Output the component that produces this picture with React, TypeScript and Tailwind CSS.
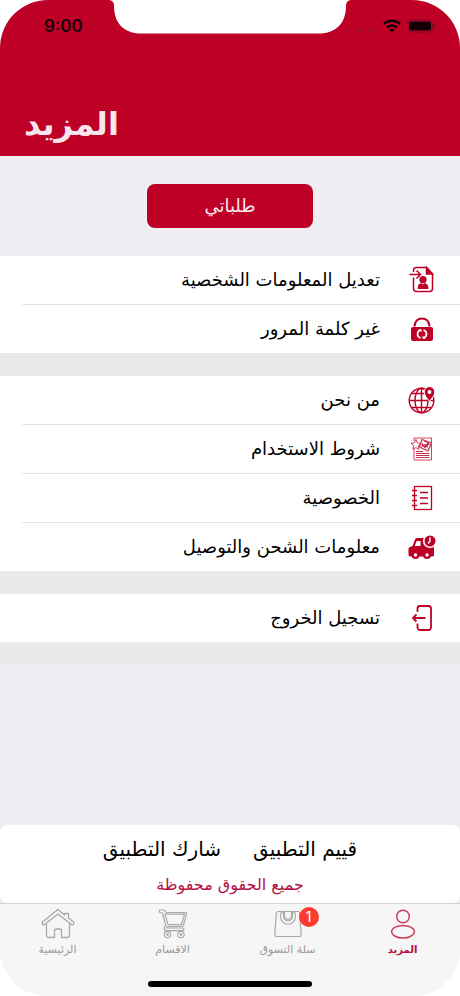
import type { ReactNode } from "react";

const RED = "#be0027";

function EditProfileIcon() {
  return (
    <svg width="28" height="28" viewBox="0 0 28 28" fill="none" stroke={RED} strokeWidth="1.5">
      <path d="M5.500 6V4.500a3 3 0 0 1 3-3h10L24.500 8v14.500a3 3 0 0 1-3 3h-13a3 3 0 0 1-3-3V11.500" />
      <path d="M18.500 1.500V8h6z" fill={RED} />
      <path d="M1.500 8.500h10.500M8.500 4.500l4 4-4 4" />
      <circle cx="15" cy="13.700" r="3.600" fill={RED} stroke="none" />
      <path d="M9.700 23v-1.500c0-2.600 1.500-4.200 3.800-4.200l1.500 1.200 1.500-1.200c2.300 0 3.800 1.600 3.800 4.200V23z" fill={RED} stroke="none" />
    </svg>
  );
}

function PasswordIcon() {
  return (
    <svg width="28" height="28" viewBox="0 0 28 28" fill="none">
      <path d="M6.500 11.500C7 6 10 3.500 14 3.500s7 2.500 7.500 8" stroke={RED} strokeWidth="2" />
      <rect x="3" y="12" width="22" height="14" rx="2" fill={RED} />
      <path d="M12.500 15c-4 1.500-4 6.500 0 8M15.500 15c4 1.500 4 6.500 0 8" stroke="#fff" strokeWidth="1.700" />
      <path d="M10.500 14.300h3v3.200zM17.500 23.700h-3v-3.200z" fill="#fff" />
    </svg>
  );
}

function GlobeIcon() {
  return (
    <svg width="28" height="28" viewBox="0 0 28 28" fill="none" stroke={RED} strokeWidth="1.400">
      <circle cx="13.500" cy="14.500" r="12.300" />
      <ellipse cx="13.500" cy="14.500" rx="6.500" ry="12.300" />
      <path d="M13.500 2.200v24.600M1.200 14.500h24.600M3.500 7.500h20M3.500 21.500h20" />
      <path d="M21.500 15.500c-2.400-3.600-5.300-6-5.300-9.600a5.300 5.300 0 0 1 10.600 0c0 3.600-2.900 6-5.300 9.600z" fill={RED} stroke="#fff" strokeWidth="1" />
      <circle cx="21.500" cy="6" r="2" fill="#fff" stroke="none" />
    </svg>
  );
}

function TermsIcon() {
  return (
    <svg width="28" height="28" viewBox="0 0 28 28" fill="none" stroke={RED} strokeWidth="0.900">
      <g opacity="0.800">
        <path d="M6 6V3h17.500v22H6V13" />
        <path d="M8 16.500h7M8 18.500h13.500M8 20.500h13.500M8 22.500h13.500" strokeWidth="1.100" />
        <path d="M8 4.500L9.300 8l3.700.5-2.800 2.300.8 3.700-3-2-3.200 1.700 1-3.500L3 8.300l3.500-.5z" fill="#fff" />
        <path d="M14 4.500l9.500 3.500-3.500 8-8.500-4z" fill="#fff" strokeWidth="1.300" />
        <path d="M14 8.500l3 4 4.500-5M13.500 11l8-2M16 6l4 1.500-1 5" strokeWidth="1.300" />
      </g>
    </svg>
  );
}

function NotebookIcon() {
  return (
    <svg width="28" height="28" viewBox="0 0 28 28" fill="none" stroke={RED} strokeWidth="1.300">
      <rect x="6.500" y="2.500" width="17" height="23" />
      <path d="M4 6.500h5M4 11.500h5M4 16.500h5M4 21.500h5" strokeWidth="1.500" />
      <path d="M12 8.500h8M12 14h8M12 19.500h8" strokeWidth="1.500" />
    </svg>
  );
}

function DeliveryIcon() {
  return (
    <svg width="28" height="28" viewBox="0 0 28 28">
      <path d="M0.500 22v-6q0-1.500 1.500-2l2.500-1 2.500-6.500Q7.500 5 9 5H22v9h4v8q0 1.500-1.500 1.500h-22q-2 0-2-1.500z" fill={RED} />
      <path d="M6.700 13l2-5h3.800v5z" fill="#fff" />
      <circle cx="7.500" cy="22" r="4" fill={RED} />
      <circle cx="7.500" cy="22" r="1.700" fill="#fff" />
      <circle cx="19" cy="22" r="4" fill={RED} />
      <circle cx="19" cy="22" r="1.700" fill="#fff" />
      <circle cx="22" cy="8" r="6.300" fill={RED} stroke="#fff" strokeWidth="1.600" />
      <path d="M22 4.200v4l-2 2.300" fill="none" stroke="#fff" strokeWidth="1.400" />
    </svg>
  );
}

function LogoutIcon() {
  return (
    <svg width="28" height="28" viewBox="0 0 28 28" fill="none" stroke={RED} strokeWidth="1.800">
      <path d="M9.500 8V4.500a2.500 2.500 0 0 1 2.500-2.500h8.500A2.500 2.500 0 0 1 23 4.500v19a2.500 2.500 0 0 1-2.500 2.500H12a2.500 2.500 0 0 1-2.500-2.500V19.500" />
      <path d="M17.500 14H6M8.500 10.500L5 14l3.500 3.500" />
    </svg>
  );
}

function UserIcon() {
  return (
    <svg width="34" height="32" viewBox="0 0 34 32" fill="none" stroke={RED} strokeOpacity="0.750" strokeWidth="1.500">
      <circle cx="17" cy="8.500" r="6.300" />
      <path d="M5.500 23.500C6 20 11 17.500 17 17.500s11 2.500 11.500 6C28 27.500 23 30 17 30S6 27.500 5.500 23.500z" />
    </svg>
  );
}

function BagIcon() {
  return (
    <svg width="34" height="32" viewBox="0 0 34 32" fill="none" stroke="#a9a9a9" strokeWidth="1.200">
      <path d="M7 3.500h20q1.500 0 1.700 1.500l1.500 21.500q0 2-2 2H5.800q-2 0-2-2L5.300 5Q5.500 3.500 7 3.500z" />
      <path d="M9.500 6a2 2 0 0 1 3-1.500V8c0 6.500 9 6.500 9 0V4.500a2 2 0 0 1 3 1.500v2c0 11-15 11-15 0z" />
      <path d="M13.500 4v4c0 4.500 7 4.500 7 0V4" />
    </svg>
  );
}

function CartIcon() {
  return (
    <svg width="34" height="32" viewBox="0 0 34 32" fill="none" stroke="#a9a9a9" strokeWidth="1.200" strokeLinejoin="round">
      <path d="M4 2h4.500l1.500 2.500h19.500q1.500 0 1 1.500L27.500 17q-.5 1.500-2 1.500H11.500l-1 1.500H27q1.800 1.300 0 2.700H9.500q-2-1.200-.8-3.700l1-1.500L6.500 5 4 4.500q-1.500-1.200 0-2.500z" />
      <path d="M9 6.200h19.500L25.500 16.700H12z" />
      <circle cx="11.500" cy="26.500" r="3.200" />
      <circle cx="25" cy="26.500" r="3.200" />
      <circle cx="11.500" cy="26.500" r="0.800" />
      <circle cx="25" cy="26.500" r="0.800" />
    </svg>
  );
}

function HomeIcon() {
  return (
    <svg width="34" height="32" viewBox="0 0 34 32" fill="none" stroke="#a9a9a9" strokeWidth="1.300" strokeLinejoin="round">
      <path d="M17 1.500L1.500 14q-1 3 1.500 3L17 6l14 11q2.500 0 1.500-3L27.500 10V5.500h-4V7z" />
      <path d="M5.500 16v11q0 2.500 2.500 2.500h5.500V23q0-2 2-2h3q2 0 2 2v6.500H26q2.500 0 2.500-2.500V16" />
    </svg>
  );
}

type Item = { label: string; icon: ReactNode };

const groups: Item[][] = [
  [
    { label: "تعديل المعلومات الشخصية", icon: <EditProfileIcon /> },
    { label: "غير كلمة المرور", icon: <PasswordIcon /> },
  ],
  [
    { label: "من نحن", icon: <GlobeIcon /> },
    { label: "شروط الاستخدام", icon: <TermsIcon /> },
    { label: "الخصوصية", icon: <NotebookIcon /> },
    { label: "معلومات الشحن والتوصيل", icon: <DeliveryIcon /> },
  ],
  [{ label: "تسجيل الخروج", icon: <LogoutIcon /> }],
];

const tabs = [
  { label: "المزيد", icon: <UserIcon />, active: true, badge: 0 },
  { label: "سلة التسوق", icon: <BagIcon />, active: false, badge: 1 },
  { label: "الاقسام", icon: <CartIcon />, active: false, badge: 0 },
  { label: "الرئيسية", icon: <HomeIcon />, active: false, badge: 0 },
];

function StatusBar() {
  return (
    <div dir="ltr" className="flex items-center justify-between pt-4 pr-6 pl-11">
      <span className="font-['Inter',sans-serif] text-[17px] leading-5 font-semibold text-[#18000a]">9:00</span>
      <div className="flex items-center gap-1.5">
        <svg width="22" height="14" viewBox="0 0 22 14" fill="#8f1029">
          <circle cx="2.500" cy="11" r="1.500" />
          <circle cx="8.200" cy="11" r="1.500" />
          <circle cx="14" cy="11" r="1.500" />
          <circle cx="19.500" cy="11" r="1.500" />
        </svg>
        <svg width="18" height="14" viewBox="0 0 18 14" fill="none" stroke="#120006" strokeWidth="2.400">
          <path d="M1 5c4.500-4.400 11.500-4.400 16 0M4 8.300c3-2.600 7-2.600 10 0" />
          <path d="M9 13.500L6.300 10.800q2.700-2 5.400 0z" fill="#120006" stroke="none" />
        </svg>
        <svg width="29" height="14" viewBox="0 0 29 14">
          <rect x="0.500" y="1" width="25" height="12" rx="3.500" fill="none" stroke="#7d0820" />
          <rect x="2" y="2.500" width="22" height="9" rx="2" fill="#120006" />
          <path d="M27 5v4q1.500-.5 1.500-2T27 5z" fill="#7d0820" />
        </svg>
      </div>
    </div>
  );
}

export default function App() {
  return (
    <div className="min-h-screen bg-white">
      <div
        dir="rtl"
        className="flex min-h-screen flex-col overflow-hidden rounded-[48px] bg-[#efeef3] font-['DejaVu_Sans',sans-serif] text-black"
      >
        <header className="relative flex h-[156px] flex-col justify-between bg-[#be0027]">
          <svg className="absolute top-0 left-1/2 -translate-x-1/2" width="244" height="34" viewBox="0 0 244 34" fill="#fff">
            <path d="M0 0c4 0 6 2 6 6 0 17 10 27.500 27 27.500h178c17 0 27-10.500 27-27.500 0-4 2-6 6-6z" />
          </svg>
          <StatusBar />
          <h1 dir="ltr" className="px-6 pb-2 text-left text-[32px] leading-12 font-bold text-[#f8e6ef]">المزيد</h1>
        </header>

        <main className="flex flex-1 flex-col">
          <div className="flex justify-center py-7">
            <button className="h-11 w-[166px] rounded-lg bg-[#be0027] text-lg text-[#fbeaf0]">طلباتي</button>
          </div>
          {groups.map((group, g) => (
            <ul key={g} className="border-b-[22px] border-[#eaeaea] bg-white">
              {group.map((item, i) => (
                <li key={item.label}>
                  <button className="flex h-12 w-full items-center gap-7 pr-6 text-right text-lg">
                    {item.icon}
                    <span>{item.label}</span>
                  </button>
                  <div className={i < group.length - 1 ? "ml-[22px] h-px bg-[#e4e4e6]" : "h-px bg-[#eaeaea]"} />
                </li>
              ))}
            </ul>
          ))}
        </main>

        <footer className="bg-[#f6f6f6]">
          <div className="bg-[#efeef3]">
            <div className="flex h-[78px] flex-col items-center rounded-lg bg-white pt-2">
              <div className="flex gap-8 text-xl leading-8">
                <button>قييم التطبيق</button>
                <button>شارك التطبيق</button>
              </div>
              <p className="pt-1 text-base leading-8 text-[#b5103f]">جميع الحقوق محفوظة</p>
            </div>
          </div>
          <nav className="grid h-[78px] grid-cols-4 border-t border-[#d2d2d4] pt-1">
            {tabs.map((tab) => (
              <button
                key={tab.label}
                className={`flex flex-col items-center leading-5 ${tab.active ? "text-[10px] font-bold text-[#b5103f]" : "text-[11px] text-[#9a9a9a]"}`}
              >
                <span className="relative">
                  {tab.icon}
                  {tab.badge > 0 && (
                    <span className="absolute -top-px -right-3.5 flex size-5 items-center justify-center rounded-full bg-[#fb3b30] font-['Inter',sans-serif] text-sm text-white">
                      {tab.badge}
                    </span>
                  )}
                </span>
                <span>{tab.label}</span>
              </button>
            ))}
          </nav>
          <div className="mx-auto mb-[9px] h-1.5 w-[164px] rounded-full bg-black" />
        </footer>
      </div>
    </div>
  );
}
